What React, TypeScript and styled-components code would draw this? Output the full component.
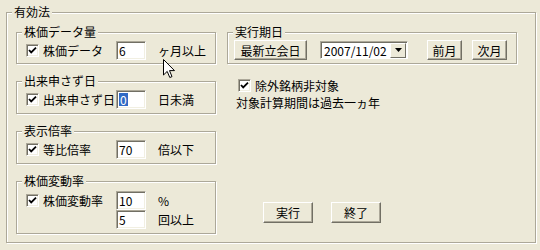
import styled, { createGlobalStyle } from "styled-components";

const GlobalStyle = createGlobalStyle`
  body {
    margin: 0;
    background: #ece9d8;
    font-family: "Noto Sans CJK JP", "Liberation Sans", sans-serif;
    font-size: 12px;
    color: #000;
  }
`;

const Screen = styled.div`
  position: relative;
  width: 540px;
  height: 250px;
  padding: 5px 0 0 6px;
  box-sizing: border-box;
`;

const Group = styled.fieldset<{ $w: number; $h: number; $px?: number; $pt?: number }>`
  box-sizing: border-box;
  margin: 0;
  min-width: 0;
  width: ${(p) => p.$w}px;
  height: ${(p) => p.$h}px;
  padding: ${(p) => p.$pt ?? 2}px 0 0 ${(p) => p.$px ?? 9}px;
  border: 1px solid #aca899;
  border-radius: 0;
  box-shadow: inset 1px 1px 0 #fff, 1px 1px 0 #fff;

  & > legend {
    margin-left: ${(p) => 5 - (p.$px ?? 9)}px;
  }
`;

const Caption = styled.legend`
  padding: 0 2px;
  line-height: 14px;
  height: 14px;
  background: #ece9d8;
  white-space: nowrap;
`;

const Columns = styled.div`
  display: flex;
  gap: 11px;
`;

const LeftCol = styled.div`
  display: flex;
  flex-direction: column;
  gap: 10px;
  width: 200px;
`;

const RightCol = styled.div`
  display: flex;
  flex-direction: column;
`;

const Row = styled.div<{ $indent?: number }>`
  display: flex;
  align-items: center;
  height: 19px;
  padding-left: ${(p) => p.$indent ?? 0}px;
`;

const CheckItem = styled.label<{ $w?: number }>`
  display: flex;
  align-items: center;
  gap: 4px;
  width: ${(p) => (p.$w ? `${p.$w}px` : "auto")};
  white-space: nowrap;
`;

const Box = styled.span`
  box-sizing: border-box;
  width: 13px;
  height: 13px;
  flex: none;
  background: #fff;
  border: 1px solid;
  border-color: #aca899 #fff #fff #aca899;
  box-shadow: inset 1px 1px 0 #716f64, inset -1px -1px 0 #f1efe2;
  display: flex;
  align-items: center;
  justify-content: center;
`;

const Field = styled.div<{ $w?: number }>`
  box-sizing: border-box;
  width: ${(p) => p.$w ?? 30}px;
  height: 19px;
  background: #fff;
  border: 1px solid;
  border-color: #aca899 #fff #fff #aca899;
  box-shadow: inset 1px 1px 0 #716f64, inset -1px -1px 0 #f1efe2;
  padding: 0 2px;
  line-height: 17px;
  display: flex;
  align-items: center;
`;

const Selected = styled.span`
  background: #316ac5;
  color: #fff;
  line-height: 13px;
  padding: 0 1px;
`;

const Unit = styled.span`
  margin-left: 12px;
  white-space: nowrap;
`;

const Button = styled.button<{ $w: number; $h?: number }>`
  box-sizing: border-box;
  width: ${(p) => p.$w}px;
  height: ${(p) => p.$h ?? 20}px;
  padding: 0;
  font: inherit;
  color: #000;
  background: #ece9d8;
  border: 1px solid;
  border-color: #fff #716f64 #716f64 #fff;
  box-shadow: inset -1px -1px 0 #aca899;
  border-radius: 0;
  flex: none;
`;

const Combo = styled.div`
  box-sizing: border-box;
  width: 88px;
  height: 18px;
  background: #fff;
  border: 1px solid;
  border-color: #aca899 #fff #fff #aca899;
  box-shadow: inset 1px 1px 0 #716f64;
  display: flex;
  align-items: center;
  justify-content: space-between;
  padding: 1px 1px 1px 3px;
`;

const DropButton = styled.span`
  box-sizing: border-box;
  width: 16px;
  height: 15px;
  background: #ece9d8;
  border: 1px solid;
  border-color: #fff #716f64 #716f64 #fff;
  display: flex;
  align-items: center;
  justify-content: center;
`;

const DateRow = styled.div`
  display: flex;
  align-items: center;
  height: 20px;
`;

const Note = styled.div<{ $top: number; $left: number }>`
  display: flex;
  align-items: center;
  height: 16px;
  margin-top: ${(p) => p.$top}px;
  margin-left: ${(p) => p.$left}px;
  white-space: nowrap;
`;

const Actions = styled.div`
  display: flex;
  gap: 18px;
  margin: 92px 0 0 36px;
`;

const Pointer = styled.svg`
  position: absolute;
  left: 163px;
  top: 59px;
`;

const Tick = () => (
  <svg width="9" height="9" viewBox="0 0 9 9">
    <polyline points="1,4 3.2,6.4 8,1.6" fill="none" stroke="#000" strokeWidth="1.8" />
  </svg>
);

const Check = ({ label, w }: { label: string; w?: number }) => (
  <CheckItem $w={w}>
    <Box>
      <Tick />
    </Box>
    {label}
  </CheckItem>
);

const App = () => {
  return (
    <Screen>
      <GlobalStyle />
      <Group $w={530} $h={238} $pt={6}>
        <Caption>有効法</Caption>
        <Columns>
          <LeftCol>
            <Group $w={200} $h={39}>
              <Caption>株価データ量</Caption>
              <Row>
                <Check label="株価データ" w={90} />
                <Field>6</Field>
                <Unit>ヶ月以上</Unit>
              </Row>
            </Group>
            <Group $w={200} $h={40}>
              <Caption>出来申さず日</Caption>
              <Row>
                <Check label="出来申さず日" w={90} />
                <Field>
                  <Selected>0</Selected>
                </Field>
                <Unit>日未満</Unit>
              </Row>
            </Group>
            <Group $w={200} $h={40}>
              <Caption>表示倍率</Caption>
              <Row>
                <Check label="等比倍率" w={90} />
                <Field>70</Field>
                <Unit>倍以下</Unit>
              </Row>
            </Group>
            <Group $w={200} $h={60} $pt={3}>
              <Caption>株価変動率</Caption>
              <Row>
                <Check label="株価変動率" w={90} />
                <Field>10</Field>
                <Unit>%</Unit>
              </Row>
              <Row $indent={90}>
                <Field>5</Field>
                <Unit>回以上</Unit>
              </Row>
            </Group>
          </LeftCol>
          <RightCol>
            <Group $w={290} $h={39} $px={6} $pt={1}>
              <Caption>実行期日</Caption>
              <DateRow>
                <Button $w={73}>最新立会日</Button>
                <Combo style={{ marginLeft: 13 }}>
                  <span>2007/11/02</span>
                  <DropButton>
                    <svg width="7" height="4" viewBox="0 0 7 4">
                      <polygon points="0,0 7,0 3.5,4" fill="#000" />
                    </svg>
                  </DropButton>
                </Combo>
                <Button $w={35} style={{ marginLeft: 19 }}>前月</Button>
                <Button $w={35} style={{ marginLeft: 10 }}>次月</Button>
              </DateRow>
            </Group>
            <Note $top={13} $left={11}>
              <Check label="除外銘柄非対象" />
            </Note>
            <Note $top={1} $left={9}>
              対象計算期間は過去一ヵ年
            </Note>
            <Actions>
              <Button $w={50} $h={21}>実行</Button>
              <Button $w={50} $h={21}>終了</Button>
            </Actions>
          </RightCol>
        </Columns>
      </Group>
      <Pointer width="13" height="20" viewBox="0 0 13 20">
        <polygon
          points="0.5,0.5 0.5,16 4.2,12.4 6.8,18.5 9,17.6 6.5,11.6 11.5,11.6"
          fill="#fff"
          stroke="#000"
          strokeWidth="1"
          strokeLinejoin="miter"
        />
      </Pointer>
    </Screen>
  );
};

export default App;
